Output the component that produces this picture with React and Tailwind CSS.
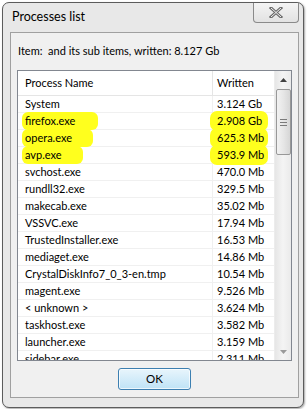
const rows = [
    ['System', '3.124 Gb'],
    ['firefox.exe', '2.908 Gb'],
    ['opera.exe', '625.3 Mb'],
    ['avp.exe', '593.9 Mb'],
    ['svchost.exe', '470.0 Mb'],
    ['rundll32.exe', '329.5 Mb'],
    ['makecab.exe', '35.02 Mb'],
    ['VSSVC.exe', '17.94 Mb'],
    ['TrustedInstaller.exe', '16.53 Mb'],
    ['mediaget.exe', '14.86 Mb'],
    ['CrystalDiskInfo7_0_3-en.tmp', '10.54 Mb'],
    ['magent.exe', '9.526 Mb'],
    ['< unknown >', '3.624 Mb'],
    ['taskhost.exe', '3.582 Mb'],
    ['launcher.exe', '3.159 Mb'],
    ['sidebar.exe', '2.311 Mb'],
];

const marked = { 'firefox.exe': 76, 'opera.exe': 71, 'avp.exe': 61 };

const App = () => {
    return (
        <div className="w-[307px] h-[409px] bg-white pl-[2px] pt-[2px] font-['Lato',sans-serif] text-[11px] text-black">
            <div className="relative w-[302px] h-[406px] rounded-[7px] border border-[#5c5c5c] bg-[#e8e8e8] shadow-[1px_1px_2px_rgba(0,0,0,0.35)] flex flex-col">
                {/* title bar */}
                <div className="h-[29px] flex items-start justify-between pl-[9px] pr-[4px]">
                    <span className="mt-[5px] text-[12.5px]">Processes list</span>
                    <button className="w-[46px] h-[20px] rounded-b-[4px] border border-t-0 border-[#8a8a8a] bg-gradient-to-b from-[#f4f4f4] to-[#e2e2e2] flex items-center justify-center">
                        <svg width="14" height="11" viewBox="0 0 14 11">
                            <path d="M2 1 L12 10 M12 1 L2 10" stroke="#6a6a6a" strokeWidth="3" strokeLinecap="square" />
                            <path d="M2 1 L12 10 M12 1 L2 10" stroke="#f2f2f2" strokeWidth="1" />
                        </svg>
                    </button>
                </div>

                {/* client area */}
                <div className="ml-[7px] mr-[4px] h-[366px] border border-[#a0a0a0] bg-[#f0f0f0] flex flex-col px-[6px]">
                    <div className="h-[37px] flex items-center pl-[1px]">Item:&nbsp; and its sub items, written: 8.127 Gb</div>

                    <div className="h-[291px] border border-[#828790] bg-white flex overflow-hidden">
                        <div className="flex-1 flex flex-col overflow-hidden">
                            <div className="h-[25px] shrink-0 flex border-b border-[#e5e5e5]">
                                <div className="w-[195px] pl-[7px] flex items-center border-r border-[#e5e5e5]">Process Name</div>
                                <div className="flex-1 pl-[4px] flex items-center">Written</div>
                            </div>
                            {rows.map(([name, size]) => (
                                <div key={name} className="h-[17px] shrink-0 flex border-b border-[#f0f0f0] leading-[16px]">
                                    <div className="relative w-[195px] pl-[7px] border-r border-[#f0f0f0]">
                                        {marked[name] && (
                                            <span
                                                className="absolute left-[4px] top-[-1px] h-[18px] rounded-[6px] bg-[#ffff1e]"
                                                style={{ width: marked[name] }}
                                            />
                                        )}
                                        <span className="relative whitespace-nowrap">{name}</span>
                                    </div>
                                    <div className="relative flex-1 pl-[4px]">
                                        {marked[name] && (
                                            <span className="absolute left-[-3px] right-[6px] top-[-2px] bottom-[-2px] rounded-[7px] bg-[#ffff1e]" />
                                        )}
                                        <span className="relative whitespace-nowrap">{size}</span>
                                    </div>
                                </div>
                            ))}
                        </div>

                        {/* scrollbar */}
                        <div className="w-[17px] shrink-0 bg-gradient-to-r from-[#e6e6e6] via-[#f4f4f4] to-[#eaeaea] border-l border-[#ececec] flex flex-col items-center">
                            <div className="h-[17px] w-full flex items-center justify-center">
                                <svg width="7" height="4" viewBox="0 0 7 4"><path d="M0 4 L3.5 0 L7 4 Z" fill="#404040" /></svg>
                            </div>
                            <div className="mt-[1px] w-[15px] h-[66px] rounded-[2px] border border-[#989898] bg-gradient-to-r from-[#f2f2f2] via-[#e6e6e6] to-[#d6d6d6] flex flex-col items-center justify-center gap-[2px]">
                                <div className="w-[7px] h-px bg-[#7a7a7a]" />
                                <div className="w-[7px] h-px bg-[#7a7a7a]" />
                                <div className="w-[7px] h-px bg-[#7a7a7a]" />
                            </div>
                            <div className="flex-1" />
                            <div className="h-[17px] w-full flex items-center justify-center">
                                <svg width="7" height="4" viewBox="0 0 7 4"><path d="M0 0 L3.5 4 L7 0 Z" fill="#9a9a9a" /></svg>
                            </div>
                        </div>
                    </div>

                    <div className="flex-1 flex items-center justify-center">
                        <button className="w-[73px] h-[22px] rounded-[3px] border border-[#3c7fb1] bg-gradient-to-b from-[#e8f5fc] to-[#bfe3f6] shadow-[inset_0_0_0_1px_rgba(255,255,255,0.7)] text-[11.5px]">
                            OK
                        </button>
                    </div>
                </div>
            </div>
        </div>
    );
};

export default App;
